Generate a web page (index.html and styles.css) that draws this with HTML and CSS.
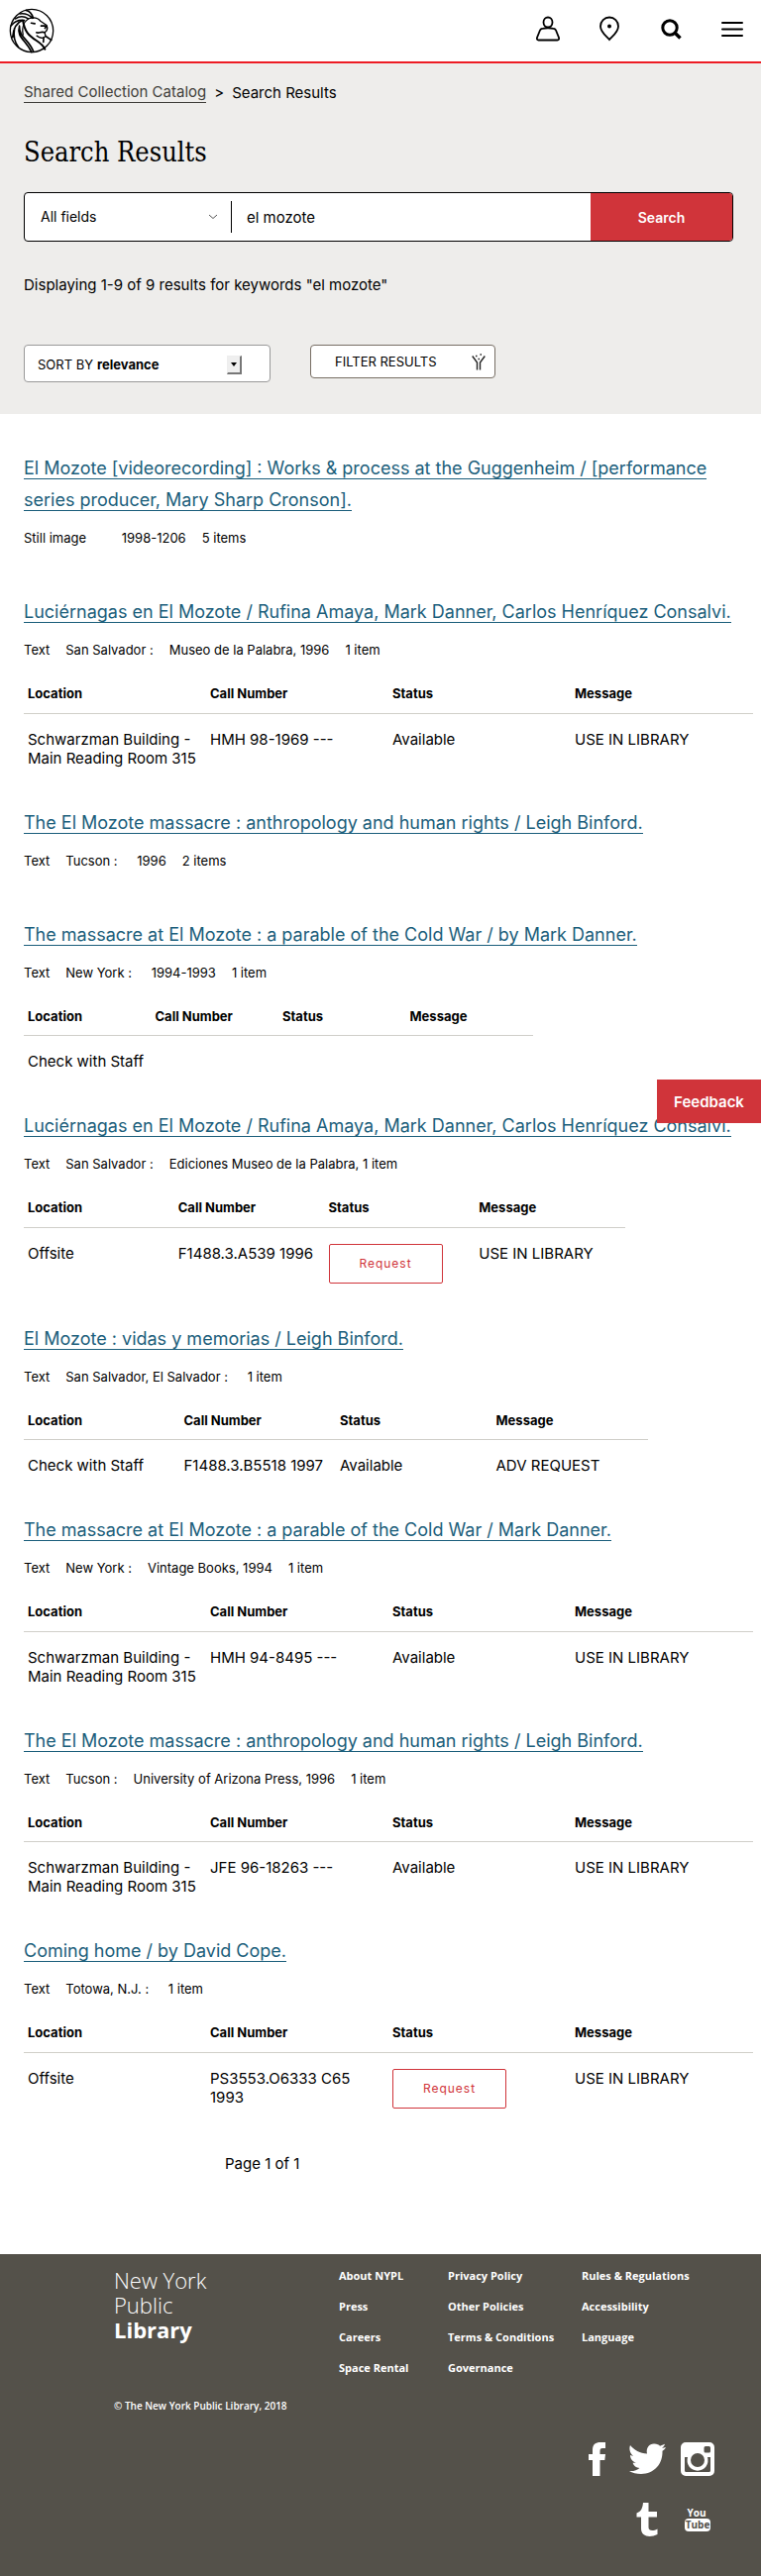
FILE: index.html
```html
<!DOCTYPE html>
<html lang="en">
<head>
<meta charset="utf-8">
<meta name="viewport" content="width=device-width, initial-scale=1">
<title>Search Results | Shared Collection Catalog</title>
<link rel="stylesheet" href="styles.css">
</head>
<body>
<header class="site-header">
  <a class="logo" href="#" aria-label="New York Public Library">
    <svg viewBox="28 22 139 139" width="46" height="46" fill="none" stroke="#000" stroke-linecap="round" stroke-linejoin="round">
      <circle cx="97.500" cy="91.500" r="65.500" stroke-width="4"/>
      <path d="M71 104 C66 78 76 60 93 53 C110 49 118 54 124 62 L143 75 C147 84 144 92 137 97 L140 108 C133 117 122 114 113 107" stroke-width="4"/>
      <path d="M71 62 C76 94 88 106 111 121 C128 132 135 142 138 148" stroke-width="6"/>
      <path d="M60 77 C50 112 80 119 97 157 M60 77 C58 112 90 118 103 156" stroke-width="5"/>
      <path d="M45 84 C40 111 45 126 57 142 M70 60 C52 66 42 80 39 112" stroke-width="5"/>
      <path d="M102 53 C98 39 91 31 80 29 M100 53 C88 41 74 38 61 40 M87 55 C73 46 58 48 48 55 M75 60 C58 58 45 63 35 76" stroke-width="5"/>
      <path d="M96 68 L107 70 M126 77 L142 77 L138 84 M112 97 C120 101 126 92 137 97 M134 112 L133 126 M141 109 L157 120" stroke-width="5"/>
    </svg>
  </a>
  <nav class="header-nav" aria-label="Main">
    <a href="#" aria-label="Log in"><svg viewBox="0 0 24 26" width="24" height="26" fill="none" stroke="#000" stroke-width="1.800"><ellipse cx="12" cy="6.500" rx="4.500" ry="5"/><path d="M6 13 Q12 11.500 18 13 Q19.500 13.200 20 14.500 L23 22 Q23.500 24.500 21.500 24.500 H2.500 Q.5 24.500 1 22 L4 14.500 Q4.500 13.200 6 13Z"/></svg></a>
    <a href="#" aria-label="Locations"><svg viewBox="0 0 24 26" width="24" height="26" fill="none" stroke="#000" stroke-width="1.800"><path d="M12 24 C9 20.500 3 16.500 3 10.500 A9 9 0 0 1 21 10.500 C21 16.500 15 20.500 12 24Z"/><circle cx="12" cy="10.500" r="2" fill="#000" stroke="none"/></svg></a>
    <a href="#" aria-label="Search"><svg viewBox="0 0 24 26" width="24" height="26" fill="none" stroke="#000" stroke-width="3"><circle cx="11" cy="12" r="7.200"/><path d="M16 17 L21.500 22.500" stroke-width="3.400"/></svg></a>
    <button type="button" aria-label="Open navigation"><svg viewBox="0 0 24 26" width="24" height="26" stroke="#000" stroke-width="2" stroke-linecap="round"><path d="M2 7 H22 M2 13.500 H22 M2 20 H22"/></svg></button>
  </nav>
</header>

<section class="search-band">
  <nav class="breadcrumb" aria-label="Breadcrumb"><a href="#">Shared Collection Catalog</a><span>&gt;</span><span>Search Results</span></nav>
  <h1 class="page-title">Search Results</h1>
  <form class="search-form">
    <div class="field-select">
      <select aria-label="Search field"><option>All fields</option></select>
      <svg viewBox="0 0 10 6" width="10" height="6" fill="none" stroke="#555"><path d="M1 1 L5 4.500 L9 1"/></svg>
    </div>
    <input type="text" aria-label="Search terms" value="el mozote">
    <button type="submit">Search</button>
  </form>
  <p class="summary">Displaying 1-9 of 9 results for keywords "el mozote"</p>
  <div class="tools">
    <div class="sort">
      <label for="sort">SORT BY</label>
      <select id="sort"><option>relevance</option></select>
      <span class="sort-arrow"></span>
    </div>
    <button type="button" class="filter">FILTER RESULTS
      <svg viewBox="0 0 14 17" width="14" height="17" fill="none" stroke="#222" stroke-width="1.400"><path d="M.7 2.500 L5.500 9 V16.500 M13.300 2.500 L8.500 9 V16.500"/><path d="M4 2.500 h1.500 M8.500 1 h1.500 M6.500 5.500 h1.500" stroke-width="1.500"/></svg>
    </button>
  </div>
</section>

<main class="results">
  <article class="result">
    <h2><a href="#">El Mozote [videorecording] : Works &amp; process at the Guggenheim / [performance series producer, Mary Sharp Cronson].</a></h2>
    <p class="meta"><span>Still image</span><span></span><span>&nbsp;1998-1206</span><span>5 items</span></p>
  </article>

  <article class="result">
    <h2><a href="#">Luciérnagas en El Mozote / Rufina Amaya, Mark Danner, Carlos Henríquez Consalvi.</a></h2>
    <p class="meta"><span>Text</span><span>San Salvador :</span><span>Museo de la Palabra, 1996</span><span>1 item</span></p>
    <table>
      <thead><tr><th>Location</th><th>Call Number</th><th>Status</th><th>Message</th></tr></thead>
      <tbody><tr><td>Schwarzman Building - Main Reading Room 315</td><td>HMH 98-1969 ---</td><td>Available</td><td>USE IN LIBRARY</td></tr></tbody>
    </table>
  </article>

  <article class="result">
    <h2><a href="#">The El Mozote massacre : anthropology and human rights / Leigh Binford.</a></h2>
    <p class="meta"><span>Text</span><span>Tucson :</span><span>&nbsp;1996</span><span>2 items</span></p>
  </article>

  <article class="result">
    <h2><a href="#">The massacre at El Mozote : a parable of the Cold War / by Mark Danner.</a></h2>
    <p class="meta"><span>Text</span><span>New York :</span><span>&nbsp;1994-1993</span><span>1 item</span></p>
    <table class="narrow">
      <thead><tr><th>Location</th><th>Call Number</th><th>Status</th><th>Message</th></tr></thead>
      <tbody><tr><td>Check with Staff</td><td></td><td></td><td></td></tr></tbody>
    </table>
  </article>

  <article class="result">
    <h2><a href="#">Luciérnagas en El Mozote / Rufina Amaya, Mark Danner, Carlos Henríquez Consalvi.</a></h2>
    <p class="meta"><span>Text</span><span>San Salvador :</span><span>Ediciones Museo de la Palabra, 1 item</span></p>
    <table class="medium">
      <thead><tr><th>Location</th><th>Call Number</th><th>Status</th><th>Message</th></tr></thead>
      <tbody><tr><td>Offsite</td><td>F1488.3.A539 1996</td><td><button type="button" class="request">Request</button></td><td>USE IN LIBRARY</td></tr></tbody>
    </table>
  </article>

  <article class="result">
    <h2><a href="#">El Mozote : vidas y memorias / Leigh Binford.</a></h2>
    <p class="meta"><span>Text</span><span>San Salvador, El Salvador :</span><span>&nbsp;1 item</span></p>
    <table class="wide">
      <thead><tr><th>Location</th><th>Call Number</th><th>Status</th><th>Message</th></tr></thead>
      <tbody><tr><td>Check with Staff</td><td>F1488.3.B5518 1997</td><td>Available</td><td>ADV REQUEST</td></tr></tbody>
    </table>
  </article>

  <article class="result">
    <h2><a href="#">The massacre at El Mozote : a parable of the Cold War / Mark Danner.</a></h2>
    <p class="meta"><span>Text</span><span>New York :</span><span>Vintage Books, 1994</span><span>1 item</span></p>
    <table>
      <thead><tr><th>Location</th><th>Call Number</th><th>Status</th><th>Message</th></tr></thead>
      <tbody><tr><td>Schwarzman Building - Main Reading Room 315</td><td>HMH 94-8495 ---</td><td>Available</td><td>USE IN LIBRARY</td></tr></tbody>
    </table>
  </article>

  <article class="result">
    <h2><a href="#">The El Mozote massacre : anthropology and human rights / Leigh Binford.</a></h2>
    <p class="meta"><span>Text</span><span>Tucson :</span><span>University of Arizona Press, 1996</span><span>1 item</span></p>
    <table>
      <thead><tr><th>Location</th><th>Call Number</th><th>Status</th><th>Message</th></tr></thead>
      <tbody><tr><td>Schwarzman Building - Main Reading Room 315</td><td>JFE 96-18263 ---</td><td>Available</td><td>USE IN LIBRARY</td></tr></tbody>
    </table>
  </article>

  <article class="result">
    <h2><a href="#">Coming home / by David Cope.</a></h2>
    <p class="meta"><span>Text</span><span>Totowa, N.J. :</span><span>&nbsp;1 item</span></p>
    <table>
      <thead><tr><th>Location</th><th>Call Number</th><th>Status</th><th>Message</th></tr></thead>
      <tbody><tr><td>Offsite</td><td>PS3553.O6333 C65 1993</td><td><button type="button" class="request">Request</button></td><td>USE IN LIBRARY</td></tr></tbody>
    </table>
  </article>

  <p class="pagination">Page 1 of 1</p>
</main>

<footer class="site-footer">
  <div class="footer-main">
    <div class="footer-brand">
      <p class="wordmark">New York<br>Public<br><strong>Library</strong></p>
      <p class="copyright">© The New York Public Library, 2018</p>
    </div>
    <ul><li><a href="#">About NYPL</a></li><li><a href="#">Press</a></li><li><a href="#">Careers</a></li><li><a href="#">Space Rental</a></li></ul>
    <ul><li><a href="#">Privacy Policy</a></li><li><a href="#">Other Policies</a></li><li><a href="#">Terms &amp; Conditions</a></li><li><a href="#">Governance</a></li></ul>
    <ul><li><a href="#">Rules &amp; Regulations</a></li><li><a href="#">Accessibility</a></li><li><a href="#">Language</a></li></ul>
  </div>
  <div class="social">
    <a href="#" aria-label="Facebook"><svg viewBox="0 0 38 36" width="38" height="36"><path fill="#fff" d="M16 35 V19 H12 V13 H16 V9 C16 3 19 1 24 1 H29 V7 H26 C24 7 23.500 8 23.500 10 V13 H29 L28.300 19 H23.500 V35Z"/></svg></a>
    <a href="#" aria-label="Twitter"><svg viewBox="0 0 38 36" width="38" height="36"><path fill="#fff" d="M2 4 C6 9 12 12 19 12.500 C17.500 6 22 2 26.500 2.500 C29 2.500 31 3.500 32 4.700 L37 2.800 C36.500 4.500 35.500 6 34 7 L38 6 C37 7.700 36 8.800 34.500 9.800 C35 23 26 33 13 33 C8.500 33 4 32 1 30 C5 30.500 9 29.300 11.500 27 C8 26.800 5.500 24.600 4.500 21.700 H8 C4.300 20.800 2 17.500 2 14 L5.300 15 C2 12.300 0.500 8 2 4Z"/></svg></a>
    <a href="#" aria-label="Instagram"><svg viewBox="0 0 36 36" width="36" height="36"><path fill="#fff" fill-rule="evenodd" d="M6 1 H30 A5 5 0 0 1 35 6 V30 A5 5 0 0 1 30 35 H6 A5 5 0 0 1 1 30 V6 A5 5 0 0 1 6 1Z M26 5 Q24.500 5 24.500 6.500 V10 Q24.500 11.500 26 11.500 H29.500 Q31 11.500 31 10 V6.500 Q31 5 29.500 5Z M5 16 V29.500 Q5 31 6.500 31 H29.500 Q31 31 31 29.500 V16 H28 A10.500 10.500 0 1 1 8 16Z M18 12 A7 7 0 1 0 18 26 A7 7 0 1 0 18 12Z"/></svg></a>
    <a href="#" aria-label="Tumblr"><svg viewBox="0 0 38 36" width="38" height="36"><path fill="#fff" d="M15 1 H20.500 V10 H29 V15.500 H20.500 V26 C20.500 29.500 25 30 29.500 27.500 V33 C22 36.500 13 35.500 13 27 V15.500 H8.500 V11.500 C13 10 14.500 6.500 15 1Z"/></svg></a>
    <a href="#" aria-label="YouTube"><svg class="youtube" viewBox="0 0 36 36" width="36" height="36"><text x="17" y="15" text-anchor="middle" fill="#fff">You</text><rect x="5" y="17" width="26" height="13" rx="4" fill="#fff"/><text x="18" y="27" text-anchor="middle" fill="#54514a">Tube</text></svg></a>
  </div>
</footer>
<button type="button" class="feedback">Feedback</button>
</body>
</html>
```
FILE: styles.css
```css
*, *::before, *::after { box-sizing: border-box; }
body {
  margin: 0;
  position: relative;
  background: #fff;
  color: #000;
  font-family: Inter, "Liberation Sans", sans-serif;
  font-size: 16px;
}
h1, h2, p, ul { margin: 0; padding: 0; }
ul { list-style: none; }
button, input, select { font-family: inherit; color: inherit; }
svg { display: block; }

.site-header {
  display: flex;
  align-items: center;
  justify-content: space-between;
  height: 64px;
  padding: 0 17px 0 9px;
  border-bottom: 2px solid #ed1c24;
}
.header-nav { display: flex; gap: 38px; align-items: center; padding-bottom: 4px; }
.header-nav button { padding: 0; border: 0; background: none; }

.search-band { background: #eeedeb; padding: 18px 28px 32px 24px; }
.breadcrumb { display: flex; gap: 8px; font-size: 15px; line-height: 24px; }
.breadcrumb a { color: #3f3e3a; text-decoration: none; border-bottom: 1px solid; line-height: 18px; margin: 2px 0; }
.page-title {
  margin-top: 30px;
  font-family: "DejaVu Serif Condensed", "DejaVu Serif", serif;
  font-size: 27px;
  font-weight: 400;
  line-height: 36px;
}
.search-form {
  display: flex;
  height: 50px;
  margin-top: 22px;
  border: 1px solid #000;
  border-radius: 4px;
  background: #fff;
  overflow: hidden;
}
.field-select { display: flex; align-items: center; width: 209px; margin: 8px 0; padding-right: 13px; border-right: 1px solid #000; }
.field-select select { flex: 1; padding: 0 0 0 16px; border: 0; background: none; appearance: none; font-size: 14px; line-height: 20px; }
.search-form input { flex: 1; min-width: 0; border: 0; padding: 0 15px; font-size: 15px; background: none; }
.search-form button { width: 143px; border: 0; background: #d0343a; color: #fff; font-size: 14px; font-weight: 600; }
.summary { margin-top: 32px; font-size: 15px; line-height: 24px; }
.tools { display: flex; align-items: flex-start; gap: 40px; margin-top: 48px; }
.sort {
  display: flex;
  align-items: center;
  gap: 4px;
  width: 249px;
  height: 38px;
  padding: 2px 28px 0 13px;
  border: 1px solid #999;
  border-radius: 4px;
  background: #fff;
  font-size: 13px;
}
.sort select { flex: 1; padding: 0; border: 0; background: none; appearance: none; font-size: 13px; font-weight: 700; }
.sort-arrow {
  display: grid;
  place-items: center;
  width: 15px;
  height: 19px;
  border: 1px solid #eee;
  border-right: 2px solid #777;
  border-bottom: 2px solid #777;
  background: #efefef;
}
.sort-arrow::after { content: ""; border: 3px solid transparent; border-top: 4px solid #000; border-bottom: 0; }
.filter {
  display: flex;
  align-items: center;
  justify-content: space-between;
  width: 187px;
  height: 34px;
  padding: 0 9px 0 24px;
  border: 1px solid #776e64;
  border-radius: 4px;
  background: #fff;
  font-size: 13px;
}

.results { padding: 39px 8px 79px 24px; }
.result { margin-bottom: 39px; }
.result h2 { font-size: 18px; font-weight: 400; line-height: 32px; }
.result h2 a { color: #1b5e7b; text-decoration: none; border-bottom: 1px solid; }
.meta { display: flex; gap: 16px; margin-top: 12px; padding-bottom: 10px; font-size: 13px; line-height: 20px; }
table { width: 100%; margin-top: 14px; border-collapse: collapse; table-layout: fixed; }
th, td { padding: 0 4px; text-align: left; vertical-align: top; }
th { height: 30px; padding-bottom: 9px; border-bottom: 1px solid #d0cfc9; font-size: 13px; font-weight: 700; line-height: 20px; }
td { padding-top: 16px; padding-bottom: 1px; font-size: 15px; line-height: 19px; }
.narrow { width: 514px; }
.medium { width: 607px; }
.wide { width: 630px; }
.request {
  display: block;
  width: 115px;
  height: 40px;
  border: 1px solid #d0343a;
  border-radius: 2px;
  background: #fff;
  color: #d0343a;
  font-size: 12px;
  letter-spacing: 1px;
}
.pagination { padding-left: 203px; margin-top: 43px; font-size: 15px; line-height: 24px; }

.site-footer { padding: 14px 46px 39px 115px; background: #54514a; color: #fff; font-family: "Open Sans", sans-serif; }
.site-footer a { color: inherit; text-decoration: none; }
.footer-main { display: flex; }
.footer-brand { width: 227px; }
.wordmark { font-size: 22px; font-weight: 300; line-height: 25px; }
.wordmark strong { font-weight: 700; }
.copyright { margin-top: 54px; font-size: 10px; font-weight: 600; line-height: 20px; }
.footer-main li { height: 31px; font-size: 11px; font-weight: 700; line-height: 16px; }
.footer-main ul:nth-of-type(1) { width: 110px; }
.footer-main ul:nth-of-type(2) { width: 135px; }
.social { display: flex; flex-wrap: wrap; justify-content: flex-end; gap: 25px 14px; width: 140px; margin: 26px 0 0 auto; }
.youtube text { font: 700 10px "Open Sans", sans-serif; }

.feedback {
  position: absolute;
  top: 1090px;
  right: 0;
  width: 105px;
  height: 44px;
  border: 0;
  background: #d0343a;
  color: #fff;
  font-size: 15px;
  font-weight: 600;
}
```
